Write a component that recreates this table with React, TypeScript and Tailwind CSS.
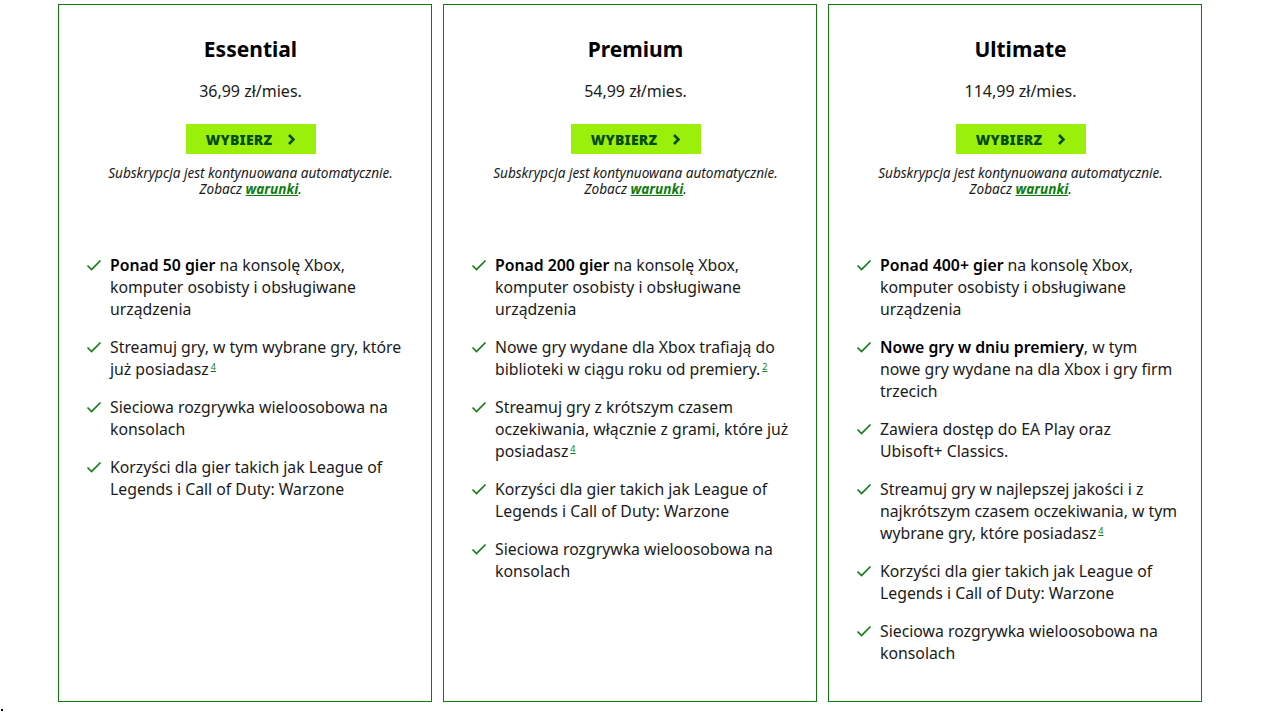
import React from "react";

type Item = { bold?: string; text: React.ReactNode; sup?: string };

const plans: { name: string; price: string; items: Item[] }[] = [
  {
    name: "Essential",
    price: "36,99 zł/mies.",
    items: [
      { bold: "Ponad 50 gier", text: " na konsolę Xbox, komputer osobisty i obsługiwane urządzenia" },
      { text: "Streamuj gry, w tym wybrane gry, które już posiadasz", sup: "4" },
      { text: "Sieciowa rozgrywka wieloosobowa na konsolach" },
      { text: "Korzyści dla gier takich jak League of Legends i Call of Duty: Warzone" },
    ],
  },
  {
    name: "Premium",
    price: "54,99 zł/mies.",
    items: [
      { bold: "Ponad 200 gier", text: " na konsolę Xbox, komputer osobisty i obsługiwane urządzenia" },
      { text: "Nowe gry wydane dla Xbox trafiają do biblioteki w ciągu roku od premiery.", sup: "2" },
      { text: "Streamuj gry z krótszym czasem oczekiwania, włącznie z grami, które już posiadasz", sup: "4" },
      { text: "Korzyści dla gier takich jak League of Legends i Call of Duty: Warzone" },
      { text: "Sieciowa rozgrywka wieloosobowa na konsolach" },
    ],
  },
  {
    name: "Ultimate",
    price: "114,99 zł/mies.",
    items: [
      { bold: "Ponad 400+ gier", text: " na konsolę Xbox, komputer osobisty i obsługiwane urządzenia" },
      { bold: "Nowe gry w dniu premiery", text: ", w tym nowe gry wydane na dla Xbox i gry firm trzecich" },
      {
        text: (
          <>
            Zawiera dostęp do EA Play oraz
            <br />
            Ubisoft+ Classics.
          </>
        ),
      },
      { text: "Streamuj gry w najlepszej jakości i z najkrótszym czasem oczekiwania, w tym wybrane gry, które posiadasz", sup: "4" },
      { text: "Korzyści dla gier takich jak League of Legends i Call of Duty: Warzone" },
      { text: "Sieciowa rozgrywka wieloosobowa na konsolach" },
    ],
  },
];

function Check() {
  return (
    <svg width="16" height="22" viewBox="0 0 16 22" className="shrink-0">
      <path d="M1.5 11.5 L5.5 15.5 L14.5 6.5" fill="none" stroke="#107c10" strokeWidth="1.6" />
    </svg>
  );
}

function Card({ plan }: { plan: (typeof plans)[number] }) {
  return (
    <div className="w-[374px] h-[698px] border border-[#107c10] flex flex-col pt-[30px]">
      <div className="flex flex-col items-center pl-[11px]">
        <h2 className="text-[21px] leading-[28px] font-bold text-black">{plan.name}</h2>
        <div className="mt-[17px] text-[16px] leading-[22px] text-[#1a1a1a]">{plan.price}</div>
        <button className="mt-[22px] w-[130px] h-[30px] bg-[#9bf00b] flex items-center justify-center gap-[16px] text-[#054b16] text-[14px] font-black tracking-[0.2px]">
          <span>WYBIERZ</span>
          <svg width="7" height="11" viewBox="0 0 7 11">
            <path d="M1 1 L5.5 5.5 L1 10" fill="none" stroke="#054b16" strokeWidth="2.6" />
          </svg>
        </button>
        <p className="mt-[11px] text-[13.6px] leading-[16px] italic text-center text-[#1a1a1a]">
          Subskrypcja jest kontynuowana automatycznie.
          <br />
          Zobacz <a className="font-bold text-[#107c10] underline">warunki</a>.
        </p>
      </div>
      <ul className="mt-[57px] pl-[27px] pr-[22px] flex flex-col gap-[16px]">
        {plan.items.map((it, i) => (
          <li key={i} className="flex gap-[8px] text-[15.8px] leading-[22px] text-[#1a1a1a]">
            <Check />
            <span>
              {it.bold && <b className="font-semibold text-black">{it.bold}</b>}
              {it.text}
              {it.sup && (
                <span className="text-[9px] leading-none text-[#107c10] underline ml-[2px] relative -top-[5px]">
                  {it.sup}
                </span>
              )}
            </span>
          </li>
        ))}
      </ul>
    </div>
  );
}

export default function App() {
  return (
    <div
      className="w-[1280px] h-[713px] bg-white overflow-hidden"
      style={{ fontFamily: '"Segoe UI", "Noto Sans", "Open Sans", sans-serif' }}
    >
      <div className="flex gap-[11px] pl-[58px] pt-[4px]">
        {plans.map((p) => (
          <Card key={p.name} plan={p} />
        ))}
      </div>
      <div className="mt-[7px] ml-[1px] w-[2px] h-[2px] bg-black" />
    </div>
  );
}
